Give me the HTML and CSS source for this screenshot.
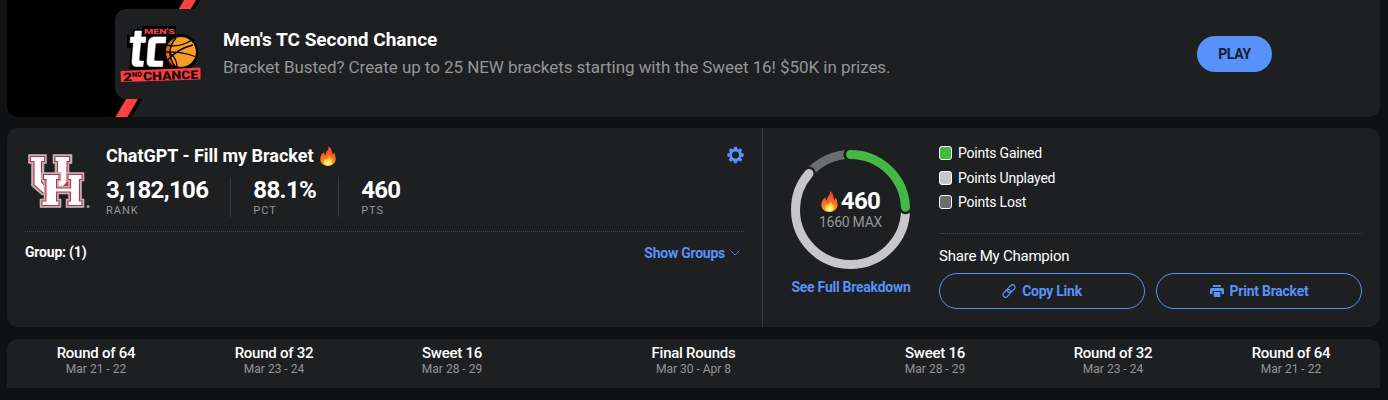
FILE: index.html
```
<!DOCTYPE html>
<html lang="en">

<head>
    <meta charset="UTF-8">
    <meta name="viewport" content="width=device-width, initial-scale=1.0">
    <title>Tournament Challenge</title>
    <link rel="stylesheet" href="styles.css">
</head>

<body>
    <!-- Shared flame icon -->
    <svg class="symbols" width="0" height="0">
        <defs>
            <linearGradient id="flame-fill" x1="0" y1="0" x2="0" y2="1">
                <stop offset="0" stop-color="#e8432a" />
                <stop offset="0.55" stop-color="#fb6a22" />
                <stop offset="1" stop-color="#ffa32e" />
            </linearGradient>
            <radialGradient id="flame-core" cx="0.5" cy="0.85" r="0.7">
                <stop offset="0" stop-color="#fffbd0" />
                <stop offset="0.5" stop-color="#ffe04a" />
                <stop offset="1" stop-color="#ff9d25" />
            </radialGradient>
        </defs>
        <symbol id="flame" viewBox="0 0 16 20">
            <path fill="url(#flame-fill)" d="M8.2 0C9.3 3 7 4.600 6.100 6.400 5.600 7.400 5.500 8.300 5.700 9.200 4.500 8.600 4 7.300 4.100 6 1.700 7.800.3 10.200.3 13c0 4 3.200 7 7.600 7s7.800-3 7.800-7.200c0-3-1.300-4.300-1.300-6.500-.8.4-1.300 1.400-1.300 2.600C11.800 7 12 5.700 11.500 4 11 2.100 9.700.8 8.200 0z" />
            <path fill="url(#flame-core)" d="M8.600 9c.2 2-1.600 2.800-2 4.600-.8-.3-1.100-.9-1.200-1.400C4.200 13 3.500 14 3.500 15.300c0 2.500 2 4.200 4.500 4.200s4.500-1.700 4.500-4.100c0-1.500-.6-2.400-.8-3.500-.5.400-.8.9-.9 1.500C10.500 11.500 10 10 8.600 9z" />
        </symbol>
    </svg>

    <!-- Promo -->
    <section class="promo">
        <svg class="promo-art" width="200" height="117" viewBox="0 0 200 117">
            <path fill="#000" d="M0 0H193L124.500 117H0z" />
            <path fill="#ff4042" d="M177 0H189L120.500 117H108.500z" />
        </svg>
        <div class="promo-logo">
            <svg width="90" height="90" viewBox="0 0 90 90">
                <path fill="#000" d="M27 17H61V26C73 22 83 32 83 43 83 52 78 58 72 61H14L16 39H12V26H17L18 20H27z" />
                <text class="logo-mens" x="29" y="25" textLength="31" lengthAdjust="spacingAndGlyphs">MEN'S</text>
                <g class="logo-tc">
                    <path d="M20 22H26.500L26 28H31L30.500 33.500H25.600L24 50.500Q24 52 25.500 52H28.500L28 57.500H21.500Q16.500 57.500 17 52L18.500 33.500H15L15.500 28H19.500z" />
                    <path d="M39 28H51L50.500 34H42Q40.500 34 40.400 35.500L39 50.500Q39 52 40.500 52H48L47.500 57.500H36.500Q31.500 57.500 32 52L33.400 34Q34 28 39 28z" />
                </g>
                <circle cx="66" cy="43" r="15" fill="#f99b27" />
                <path fill="#e4671c" d="M60 29.500Q51 33 51 43 52 54 60 57 55 50 55 43 56 35 60 29.500z" />
                <path class="seam" d="M61 29Q55 36 55 43 55 51 60 57M52 36Q64 39 76 31.500M51 43Q66 42 80 47.500M53 51Q62 40 78 36M62 58Q62 50 55.500 44.500" />
                <path fill="#f83e42" d="M5.500 62L85.500 58.500V70.500L6 73z" />
                <g transform="rotate(-2 45 66)">
                    <text class="logo-second" x="8" y="71" textLength="9" lengthAdjust="spacingAndGlyphs">2</text>
                    <text class="logo-nd" x="17" y="67" textLength="10" lengthAdjust="spacingAndGlyphs">ND</text>
                    <text class="logo-second" x="28" y="71" textLength="55" lengthAdjust="spacingAndGlyphs">CHANCE</text>
                </g>
            </svg>
        </div>
        <div class="promo-text">
            <h2 class="promo-title">Men's TC Second Chance</h2>
            <p class="promo-description">Bracket Busted? Create up to 25 NEW brackets starting with the Sweet 16! $50K in prizes.</p>
        </div>
        <button class="play-button">PLAY</button>
    </section>

    <!-- Entry summary -->
    <section class="entry">
        <div class="entry-main">
            <div class="entry-header">
                <svg class="team-logo" width="64" height="58" viewBox="0 0 64 58">
                    <path class="logo-edge" d="M1.500 1.500H19.500V10.500H17V28L20 31H28V10.500H26V1.500H45V10.500H42V31L31 42H15L4.500 33V10.500H1.500z" />
                    <path class="logo-line" d="M3.500 3.500H17.500V8.500H14.500V29L18 33H27L30.500 29V8.500H28V3.500H42.500V8.500H40V30L34 37L30 40H16L7 32V8.500H3.500z" />
                    <path class="logo-edge" d="M14.500 19.500H34V28H31.500V33H41.500V28H39V19.500H57V28H54.500V46H57V54.500H39V46H41.500V41H31.500V46H34V54.500H13V46H17V28H14.500z" />
                    <path class="logo-line" d="M16.500 21.500H32V26.500H29.500V35H43.500V26.500H41V21.500H55V26.500H52.500V48H55V52.500H41V48H43.500V39H29.500V48H32V52.500H15V48H19V26.500H16.500z" />
                    <path fill="#ce2944" d="M36 33L41 28V33z" />
                    <circle cx="61" cy="53.500" r="1.500" fill="#999" />
                </svg>
                <div class="entry-info">
                    <div class="entry-name">ChatGPT - Fill my Bracket <svg class="name-flame" width="16" height="20"><use href="#flame" /></svg></div>
                    <div class="stats">
                        <div class="stat">
                            <div class="stat-value">3,182,106</div>
                            <div class="stat-label">RANK</div>
                        </div>
                        <div class="stat">
                            <div class="stat-value">88.1%</div>
                            <div class="stat-label">PCT</div>
                        </div>
                        <div class="stat">
                            <div class="stat-value">460</div>
                            <div class="stat-label">PTS</div>
                        </div>
                    </div>
                </div>
                <svg class="gear" width="17" height="18" viewBox="0 0 18 18">
                    <g fill="#5891fa">
                        <rect x="7.200" y="0.300" width="3.600" height="17.400" rx="1" />
                        <rect x="7.200" y="0.300" width="3.600" height="17.400" rx="1" transform="rotate(45 9 9)" />
                        <rect x="7.200" y="0.300" width="3.600" height="17.400" rx="1" transform="rotate(90 9 9)" />
                        <rect x="7.200" y="0.300" width="3.600" height="17.400" rx="1" transform="rotate(135 9 9)" />
                        <circle cx="9" cy="9" r="6.800" />
                    </g>
                    <circle cx="9" cy="9" r="3.700" fill="#1e1f21" />
                </svg>
            </div>
            <div class="groups">
                <span class="groups-title">Group: (1)</span>
                <a class="link show-groups">Show Groups
                    <svg width="10" height="6" viewBox="0 0 10 6"><path d="M.5.5L5 5 9.500.5" fill="none" stroke="#4b7cd4" /></svg>
                </a>
            </div>
        </div>

        <div class="entry-side">
            <div class="points">
                <div class="ring">
                    <svg width="119" height="119" viewBox="0 0 119 119">
                        <g class="arcs" transform="rotate(-90 59.500 59.500)">
                            <circle class="arc lost" cx="59.500" cy="59.500" r="55" pathLength="360" />
                            <circle class="arc outline unplayed-length" cx="59.500" cy="59.500" r="55" pathLength="360" />
                            <circle class="arc unplayed unplayed-length" cx="59.500" cy="59.500" r="55" pathLength="360" />
                            <circle class="arc outline gained-length" cx="59.500" cy="59.500" r="55" pathLength="360" />
                            <circle class="arc gained gained-length" cx="59.500" cy="59.500" r="55" pathLength="360" />
                        </g>
                    </svg>
                    <div class="ring-text">
                        <div class="ring-points"><svg width="17" height="21"><use href="#flame" /></svg>460</div>
                        <div class="ring-max">1660 MAX</div>
                    </div>
                </div>
                <a class="link">See Full Breakdown</a>
            </div>
            <div class="details">
                <ul class="legend">
                    <li><span class="swatch green"></span>Points Gained</li>
                    <li><span class="swatch light"></span>Points Unplayed</li>
                    <li><span class="swatch dark"></span>Points Lost</li>
                </ul>
                <div class="share-title">Share My Champion</div>
                <div class="share-buttons">
                    <button class="outline-button">
                        <svg width="14" height="14" viewBox="0 0 14 14" fill="none" stroke="#5891fa" stroke-width="1.200">
                            <rect x="-4.400" y="-2.500" width="8.800" height="5" rx="2.500" transform="translate(9.200 4.600) rotate(-45)" />
                            <rect x="-4.400" y="-2.500" width="8.800" height="5" rx="2.500" transform="translate(4.800 9.400) rotate(-45)" />
                        </svg>
                        Copy Link
                    </button>
                    <button class="outline-button">
                        <svg width="14" height="12" viewBox="0 0 14 12" fill="#5891fa">
                            <path d="M3 0H11V2H3zM1.500 3H12.500Q14 3 14 4.500V9H11.500V6H2.500V9H0V4.500Q0 3 1.500 3zM3.700 7H10.300V12H3.700z" />
                        </svg>
                        Print Bracket
                    </button>
                </div>
            </div>
        </div>
    </section>

    <!-- Rounds -->
    <nav class="rounds">
        <div class="round"><b>Round of 64</b><span>Mar 21 - 22</span></div>
        <div class="round"><b>Round of 32</b><span>Mar 23 - 24</span></div>
        <div class="round"><b>Sweet 16</b><span>Mar 28 - 29</span></div>
        <div class="round final"><b>Final Rounds</b><span>Mar 30 - Apr 8</span></div>
        <div class="round"><b>Sweet 16</b><span>Mar 28 - 29</span></div>
        <div class="round"><b>Round of 32</b><span>Mar 23 - 24</span></div>
        <div class="round"><b>Round of 64</b><span>Mar 21 - 22</span></div>
    </nav>
</body>

</html>
```
FILE: styles.css
```
* {
    box-sizing: border-box;
}

body {
    height: 400px;
    margin: 0;
    padding: 0 8px 0 7px;
    overflow: hidden;
    background-color: #101113;
    color: #fff;
    font-family: Roboto, Arial, sans-serif;
}

button {
    font-family: inherit;
    cursor: pointer;
}

.symbols {
    position: absolute;
}

.link {
    color: #5891fa;
    font-size: 14px;
    font-weight: 700;
    letter-spacing: -0.25px;
    line-height: 16px;
    cursor: pointer;
}

/* Promo */
.promo {
    position: relative;
    display: flex;
    height: 117px;
    padding: 9px 108px 0;
    overflow: hidden;
    background-color: #1e1f21;
    border-radius: 0 0 11px 11px;
}

.promo-art {
    position: absolute;
    top: 0;
    left: 0;
}

.promo-logo {
    position: relative;
    width: 90px;
    height: 90px;
    background-color: #1e1f21;
    border-radius: 11px;
}

.logo-mens {
    fill: #f83e42;
    font-size: 8px;
    font-weight: 900;
}

.logo-tc {
    fill: #fff;
    stroke: #fff;
    stroke-width: 0.6;
}

.logo-second {
    fill: #15090a;
    font-size: 12px;
    font-weight: 900;
}

.logo-nd {
    fill: #15090a;
    font-size: 7px;
    font-weight: 900;
}

.seam {
    fill: none;
    stroke: #000;
    stroke-width: 1.3;
}

.promo-text {
    flex: 1;
    padding: 20px 0 0 18px;
}

.promo-title {
    margin: 0;
    font-size: 19px;
    font-weight: 700;
    line-height: 22px;
}

.promo-description {
    margin: 4px 0 0;
    color: #949597;
    font-size: 17px;
    letter-spacing: -0.06px;
    line-height: 24px;
}

.play-button {
    width: 75px;
    height: 36px;
    margin-top: 27px;
    padding: 0;
    background-color: #5891fa;
    color: #141d2f;
    font-size: 14px;
    font-weight: 700;
    letter-spacing: -0.3px;
    border: none;
    border-radius: 18px;
}

/* Entry summary */
.entry {
    display: flex;
    height: 199px;
    margin-top: 11px;
    background-color: #1e1f21;
    border-radius: 11px;
}

.entry-main {
    width: 756px;
    padding: 17px 18px 0;
    border-right: 1px solid #39393b;
}

.entry-header {
    display: flex;
    height: 87px;
    border-bottom: 1px dotted #47484b;
}

.team-logo {
    flex: none;
    margin: 8px 0 0 2px;
}

.logo-edge {
    fill: #b6b5b7;
    stroke: #b6b5b7;
    stroke-width: 0.6;
}

.logo-line {
    fill: #fff;
    stroke: #ce2944;
    stroke-width: 1.1;
}

.entry-info {
    flex: 1;
    padding-left: 15px;
}

.entry-name {
    display: flex;
    align-items: center;
    gap: 6px;
    height: 20px;
    font-size: 18px;
    font-weight: 700;
    letter-spacing: -0.02px;
}

.name-flame {
    margin-top: 2px;
}

.stats {
    display: flex;
    margin-top: 12px;
}

.stat {
    height: 40px;
    margin-right: 22px;
    padding-right: 22px;
    border-right: 1px solid #39393b;
}

.stat:last-child {
    border-right: none;
}

.stat-value {
    font-size: 24px;
    font-weight: 700;
    letter-spacing: -0.65px;
    line-height: 27px;
}

.stat-label {
    color: #949597;
    font-size: 11px;
    letter-spacing: 1px;
    line-height: 13px;
}

.gear {
    flex: none;
    margin-top: 1px;
}

.groups {
    display: flex;
    justify-content: space-between;
    padding: 12px 4px 0 0;
}

.groups-title {
    font-size: 14px;
    font-weight: 700;
    letter-spacing: -0.2px;
}

.show-groups {
    display: flex;
    align-items: center;
    gap: 5px;
    margin-top: 1px;
}

.entry-side {
    display: flex;
    flex: 1;
    padding: 17px 18px 0 28px;
}

.points {
    width: 120px;
    margin-right: 28px;
    padding-top: 5px;
    text-align: center;
    white-space: nowrap;
}

.ring {
    position: relative;
    width: 119px;
    height: 119px;
    margin-bottom: 8px;
}

.ring-text {
    position: absolute;
    top: 38px;
    left: 0;
    width: 100%;
}

.ring-points {
    display: flex;
    align-items: center;
    justify-content: center;
    gap: 3px;
    height: 26px;
    font-size: 24px;
    font-weight: 700;
    letter-spacing: -0.6px;
}

.ring-max {
    color: #949597;
    font-size: 14px;
    letter-spacing: -0.25px;
    line-height: 17px;
}

.arc {
    fill: none;
    stroke-width: 9;
    stroke-linecap: round;
}

.lost {
    stroke: #6c6d6f;
    stroke-linecap: butt;
    stroke-dasharray: 0 311 49 0;
}

.unplayed {
    stroke: #c7c7c9;
}

.gained {
    stroke: #43b944;
}

.outline {
    stroke: #1e1f21;
    stroke-width: 14;
}

.unplayed-length {
    stroke-dasharray: 0 88 223 49;
}

.gained-length {
    stroke-dasharray: 87.5 272.5;
}

.details {
    flex: 1;
}

.legend {
    height: 89px;
    margin: 0;
    padding: 0;
    list-style: none;
    border-bottom: 1px dotted #47484b;
}

.legend li {
    display: flex;
    align-items: center;
    gap: 6px;
    height: 16px;
    margin-bottom: 8.5px;
    font-size: 14px;
    letter-spacing: -0.22px;
}

.swatch {
    width: 13px;
    height: 14px;
    border: 1px solid #fff;
    border-radius: 3px;
}

.green {
    background-color: #43b944;
}

.light {
    background-color: #c7c7c9;
}

.dark {
    background-color: #6c6d6f;
}

.share-title {
    margin-top: 13px;
    font-size: 15px;
    letter-spacing: -0.22px;
    line-height: 18px;
}

.share-buttons {
    display: flex;
    gap: 11px;
    margin-top: 8px;
}

.outline-button {
    display: flex;
    flex: 1;
    align-items: center;
    justify-content: center;
    gap: 6px;
    height: 36px;
    padding: 0;
    background: none;
    color: #5891fa;
    font-size: 14px;
    font-weight: 700;
    letter-spacing: -0.25px;
    border: 1px solid #5891fa;
    border-radius: 18px;
}

/* Rounds */
.rounds {
    display: flex;
    height: 49px;
    margin-top: 12px;
    padding-top: 5px;
    background-color: #1e1f21;
    border-radius: 11px 11px 0 0;
}

.round {
    width: 178px;
    text-align: center;
}

.round.final {
    flex: 1;
}

.round b {
    display: block;
    font-size: 15px;
    font-weight: 500;
    letter-spacing: -0.25px;
    line-height: 18px;
}

.round span {
    display: block;
    color: #949597;
    font-size: 12px;
    line-height: 14px;
}
```
